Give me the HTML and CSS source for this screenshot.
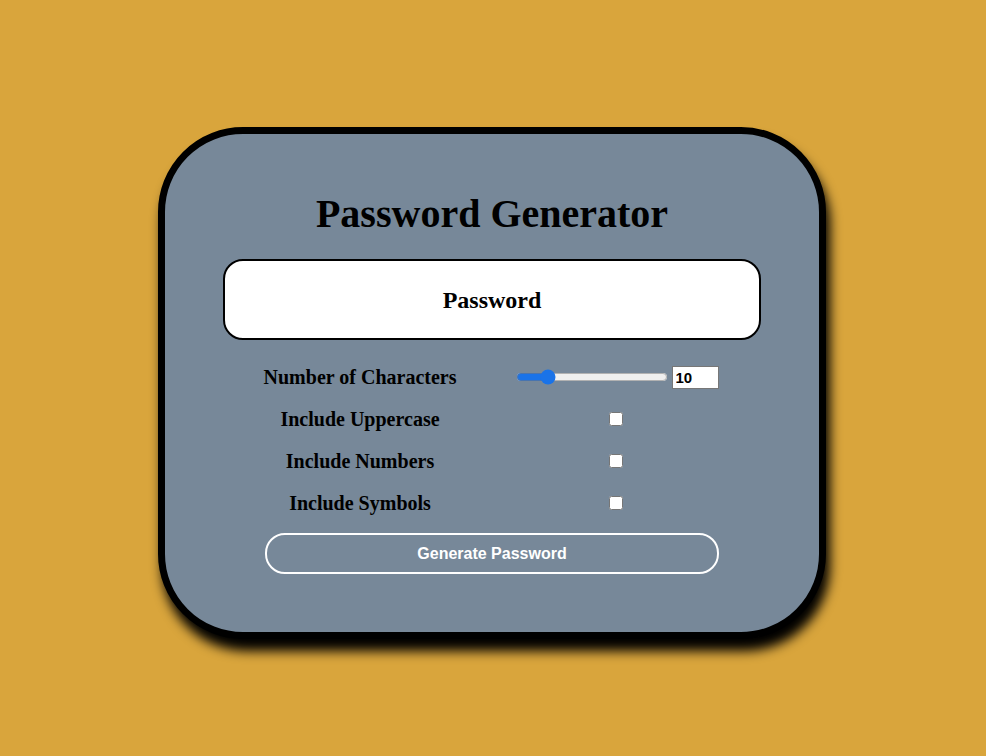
FILE: index.html
```html
<!DOCTYPE html>
<html>
<head>
<meta charset="utf-8">
<link rel="stylesheet" href="styles.css">
</head>
<body>
<div class="page">
  <div class="card">
    <h1 class="title">Password Generator</h1>
    <div class="output">Password</div>
    <div class="options">
      <label class="label">Number of Characters</label>
      <div class="control">
        <input class="range" type="range" min="1" max="50" value="10">
        <input class="num" type="number" value="10">
      </div>
      <label class="label">Include Uppercase</label>
      <div class="control"><input class="check" type="checkbox"></div>
      <label class="label">Include Numbers</label>
      <div class="control"><input class="check" type="checkbox"></div>
      <label class="label">Include Symbols</label>
      <div class="control"><input class="check" type="checkbox"></div>
    </div>
    <button class="generate">Generate Password</button>
  </div>
</div>
</body>
</html>
```
FILE: styles.css
```css
html, body {
  margin: 0;
  padding: 0;
}
body {
  background: #d9a53c;
  font-family: "Liberation Serif", "DejaVu Serif", serif;
}
.page {
  box-sizing: border-box;
  min-height: 100vh;
  padding-top: 127px;
  display: flex;
  align-items: flex-start;
  justify-content: center;
  padding-right: 2px;
}
.card {
  box-sizing: border-box;
  width: 668px;
  height: 512px;
  border: 7px solid #000;
  border-radius: 85px;
  background: #778899;
  box-shadow: 4px 12px 12px #000;
  display: flex;
  flex-direction: column;
  align-items: center;
  padding-top: 56px;
}
.title {
  margin: 0;
  font-size: 40px;
  line-height: 48px;
  height: 48px;
  font-weight: bold;
  color: #000;
}
.output {
  box-sizing: border-box;
  margin-top: 21px;
  width: 538px;
  height: 81px;
  background: #fff;
  border: 2px solid #000;
  border-radius: 20px;
  display: flex;
  align-items: center;
  justify-content: center;
  font-weight: bold;
  font-size: 24px;
  padding-top: 2px;
}
.options {
  margin-top: 16px;
  width: 454px;
  display: grid;
  grid-template-columns: 190px 1fr;
  column-gap: 60px;
  grid-auto-rows: 42px;
}
.label {
  display: flex;
  align-items: center;
  justify-content: center;
  font-weight: bold;
  font-size: 20px;
  white-space: nowrap;
}
.control {
  display: flex;
  align-items: center;
  justify-content: center;
}
.range {
  width: 152px;
  margin: 0 4px 0 0;
  accent-color: #1a73e8;
}
.num {
  box-sizing: border-box;
  width: 47px;
  height: 23px;
  font-family: "Liberation Sans", Arial, sans-serif;
  font-weight: bold;
  font-size: 15px;
  border: 1px solid #777;
  padding: 0 3px;
  margin: 0;
}
.check {
  width: 14px;
  height: 14px;
  margin: 0 0 0 -2px;
}
.generate {
  box-sizing: border-box;
  margin-top: 9px;
  width: 454px;
  height: 41px;
  background: transparent;
  border: 2px solid #fff;
  border-radius: 20px;
  color: #fff;
  font-family: "Liberation Sans", Arial, sans-serif;
  font-weight: bold;
  font-size: 16px;
}
```
